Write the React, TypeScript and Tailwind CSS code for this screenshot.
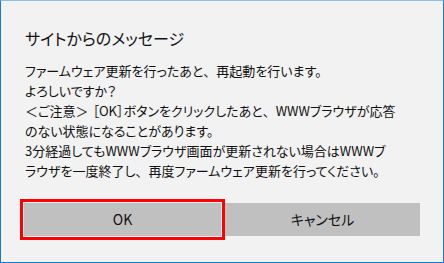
import React from "react";

const FW = ({ c }: { c: string }) => (
  <span className="[font-feature-settings:normal]">{c}</span>
);

function render(line: string) {
  const parts: React.ReactNode[] = [];
  let buf = "";
  let k = 0;
  for (const ch of line) {
    if (ch === "、") {
      if (buf) parts.push(<span key={k++}>{buf}</span>);
      buf = "";
      parts.push(<FW key={k++} c={ch} />);
    } else {
      buf += ch;
    }
  }
  if (buf) parts.push(<span key={k++}>{buf}</span>);
  return parts;
}

export default function App() {
  const lines = [
    "ファームウェア更新を行ったあと、再起動を行います。",
    "よろしいですか？",
    null,
    "のない状態になることがあります。",
    "3分経過してもWWWブラウザ画面が更新されない場合はWWWブ",
    "ラウザを一度終了し、再度ファームウェア更新を行ってください。",
  ];
  return (
    <div
      className="w-[444px] h-[263px] bg-[#f2f2f2] border border-[#1979ca] border-t-[#8cc0ec] flex flex-col text-[#111] [font-feature-settings:'palt']"
      style={{ fontFamily: '"Noto Sans CJK JP", "Noto Sans", sans-serif' }}
    >
      <div className="pl-[24px] pt-[25px] text-[16px] leading-[24px] whitespace-nowrap">
        サイトからのメッセージ
      </div>
      <div className="pl-[24px] pt-[11px] text-[13px] leading-[20px]">
        {lines.map((l, i) =>
          l === null ? (
            <div key={i} className="whitespace-nowrap">
              ＜ご注意＞<span className="inline-block w-[4px]"></span>［OK］ボタンをクリックしたあと
              <FW c="、" />
              WWWブラウザが応答
            </div>
          ) : (
            <div key={i} className="whitespace-nowrap">
              {render(l)}
            </div>
          )
        )}
      </div>
      <div className="pl-[23px] pt-[22px] flex gap-[4px]">
        <button className="w-[197px] h-[33px] bg-[#c0c0c0] text-[14px] text-[#111] outline outline-[3px] outline-[#ff0000] outline-offset-[1px]">
          OK
        </button>
        <button className="w-[195px] h-[33px] bg-[#c0c0c0] text-[14px] text-[#111]">
          キャンセル
        </button>
      </div>
    </div>
  );
}
